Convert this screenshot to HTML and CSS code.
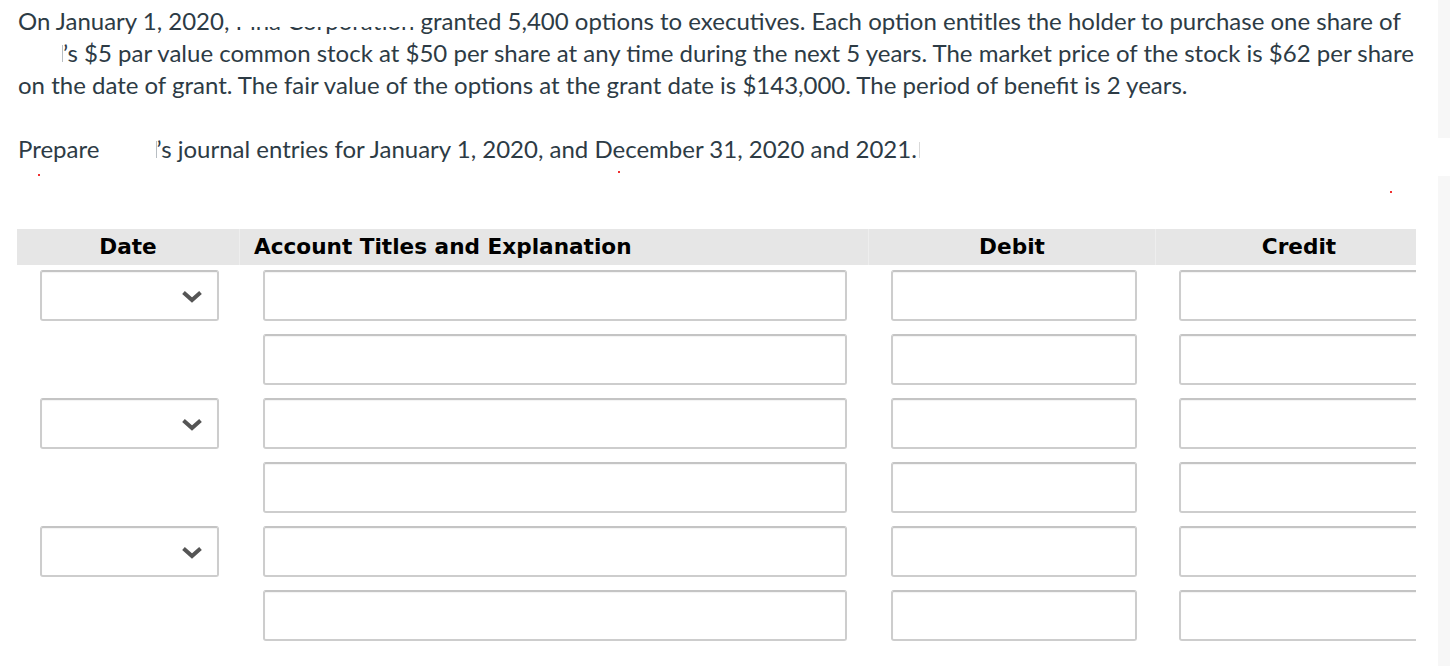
FILE: index.html
```html
<!DOCTYPE html>
<html lang="en">
<head>
<meta charset="utf-8">
<title>Journal entries</title>
<link rel="stylesheet" href="styles.css">
</head>
<body>
<div class="page">
  <main class="main">
    <div class="prose">
      <p class="intro">On January 1, 2020, <span class="redact">Pina Corporation</span> granted 5,400 options to executives. Each option entitles the holder to purchase one share of<br><span class="hidden-name hn-1"></span>’s $5 par value common stock at $50 per share at any time during the next 5 years. The market price of the stock is $62 per share<br>on the date of grant. The fair value of the options at the grant date is $143,000. The period of benefit is 2 years.</p>
      <p>Prepare <span class="hidden-name hn-2"></span>’s journal entries for January 1, 2020, and December 31, 2020 and 2021.<span class="tick"></span></p>
    </div>

    <div class="journal">
      <div class="jhead">
        <div class="hcell hc-date">Date</div>
        <div class="hcell hc-acct">Account Titles and Explanation</div>
        <div class="hcell hc-num">Debit</div>
        <div class="hcell hc-num">Credit</div>
      </div>
      <div class="jbody">
        <div class="jrow">
          <div class="cell c-date"><div class="select"><svg class="chev" width="22" height="13" viewBox="0 0 22 13"><polyline points="2.5,2.5 11,10 19.5,2.5" fill="none" stroke="#555" stroke-width="4" stroke-linejoin="miter" stroke-linecap="butt"/></svg></div></div>
          <div class="cell c-acct"><div class="field"></div></div>
          <div class="cell c-debit"><div class="field"></div></div>
          <div class="cell c-credit"><div class="field"></div></div>
        </div>
        <div class="jrow">
          <div class="cell c-date"></div>
          <div class="cell c-acct"><div class="field"></div></div>
          <div class="cell c-debit"><div class="field"></div></div>
          <div class="cell c-credit"><div class="field"></div></div>
        </div>
        <div class="jrow">
          <div class="cell c-date"><div class="select"><svg class="chev" width="22" height="13" viewBox="0 0 22 13"><polyline points="2.5,2.5 11,10 19.5,2.5" fill="none" stroke="#555" stroke-width="4" stroke-linejoin="miter" stroke-linecap="butt"/></svg></div></div>
          <div class="cell c-acct"><div class="field"></div></div>
          <div class="cell c-debit"><div class="field"></div></div>
          <div class="cell c-credit"><div class="field"></div></div>
        </div>
        <div class="jrow">
          <div class="cell c-date"></div>
          <div class="cell c-acct"><div class="field"></div></div>
          <div class="cell c-debit"><div class="field"></div></div>
          <div class="cell c-credit"><div class="field"></div></div>
        </div>
        <div class="jrow">
          <div class="cell c-date"><div class="select"><svg class="chev" width="22" height="13" viewBox="0 0 22 13"><polyline points="2.5,2.5 11,10 19.5,2.5" fill="none" stroke="#555" stroke-width="4" stroke-linejoin="miter" stroke-linecap="butt"/></svg></div></div>
          <div class="cell c-acct"><div class="field"></div></div>
          <div class="cell c-debit"><div class="field"></div></div>
          <div class="cell c-credit"><div class="field"></div></div>
        </div>
        <div class="jrow">
          <div class="cell c-date"></div>
          <div class="cell c-acct"><div class="field"></div></div>
          <div class="cell c-debit"><div class="field"></div></div>
          <div class="cell c-credit"><div class="field"></div></div>
        </div>
      </div>
    </div>
  </main>
  <aside class="side">
    <div class="strip strip-top"></div>
    <div class="strip strip-bottom"></div>
  </aside>
</div>
<span class="mark m1"></span>
<span class="mark m2"></span>
<span class="mark m3"></span>
</body>
</html>
```
FILE: styles.css
```css
html, body {
  margin: 0;
  padding: 0;
  background: #ffffff;
}

body {
  font-family: Lato, "Liberation Sans", sans-serif;
  color: #2d3b45;
  position: relative;
}

.page {
  display: flex;
  min-height: 666px;
}

.main {
  width: 1421px;
  padding: 5px 0 0 17px;
}

.prose p {
  margin: 0;
  padding-left: 1px;
  font-size: 24px;
  line-height: 32px;
  white-space: nowrap;
}

.prose p.intro {
  margin-bottom: 32px;
}

.redact {
  display: inline-block;
  vertical-align: baseline;
  clip-path: inset(22px 0 0 0);
}

.hidden-name {
  display: inline-block;
  height: 17px;
  vertical-align: baseline;
  border-right: 1px solid #b8bec3;
}

.hn-1 { width: 44px; }
.hn-2 { width: 50px; }

.tick {
  display: inline-block;
  width: 3px;
  height: 16px;
  margin-left: 2px;
  border-left: 1px solid #d9d9d9;
  vertical-align: baseline;
}

.journal {
  margin-top: 64px;
  width: 1399px;
  overflow: hidden;
}

.jhead,
.jrow {
  display: grid;
  grid-template-columns: 222px 629px 287px 287px;
}

.jhead {
  height: 36px;
  background: #e6e6e6;
}

.hcell {
  font-family: "DejaVu Sans", Verdana, sans-serif;
  font-weight: bold;
  font-size: 21.6px;
  color: #000;
  line-height: 36px;
}

.hcell + .hcell {
  border-left: 1px solid #eeeeee;
}

.hc-date,
.hc-num {
  text-align: center;
}

.hc-acct {
  padding-left: 14px;
}

.jbody {
  display: flex;
  flex-direction: column;
  gap: 13px;
  padding-top: 5px;
}

.jrow {
  height: 51px;
}

.cell {
  padding-left: 23px;
}

.c-acct,
.c-credit {
  padding-left: 24px;
}

.select,
.field {
  box-sizing: border-box;
  height: 51px;
  border: 2px solid #cdcdcd;
  border-top-color: #c4c4c4;
  border-radius: 3px;
  background: #fff;
  box-shadow: inset 0 1px 1px rgba(0, 0, 0, 0.05);
}

.select {
  width: 179px;
  display: flex;
  align-items: center;
  justify-content: flex-end;
  padding-right: 14px;
}

.chev {
  display: block;
  margin-top: 1px;
}

.c-acct .field { width: 584px; }
.c-debit .field { width: 246px; }
.c-credit .field { width: 262px; }

.side {
  width: 12px;
  display: flex;
  flex-direction: column;
}

.strip {
  background: #f7f7f7;
}

.strip-top {
  height: 138px;
}

.strip-bottom {
  margin-top: 38px;
  flex: 1;
}

.mark {
  position: absolute;
  width: 2px;
  height: 2px;
  background: #f03030;
}

.m1 { left: 38px; top: 174px; }
.m2 { left: 618px; top: 171px; }
.m3 { left: 1390px; top: 191px; }
```
